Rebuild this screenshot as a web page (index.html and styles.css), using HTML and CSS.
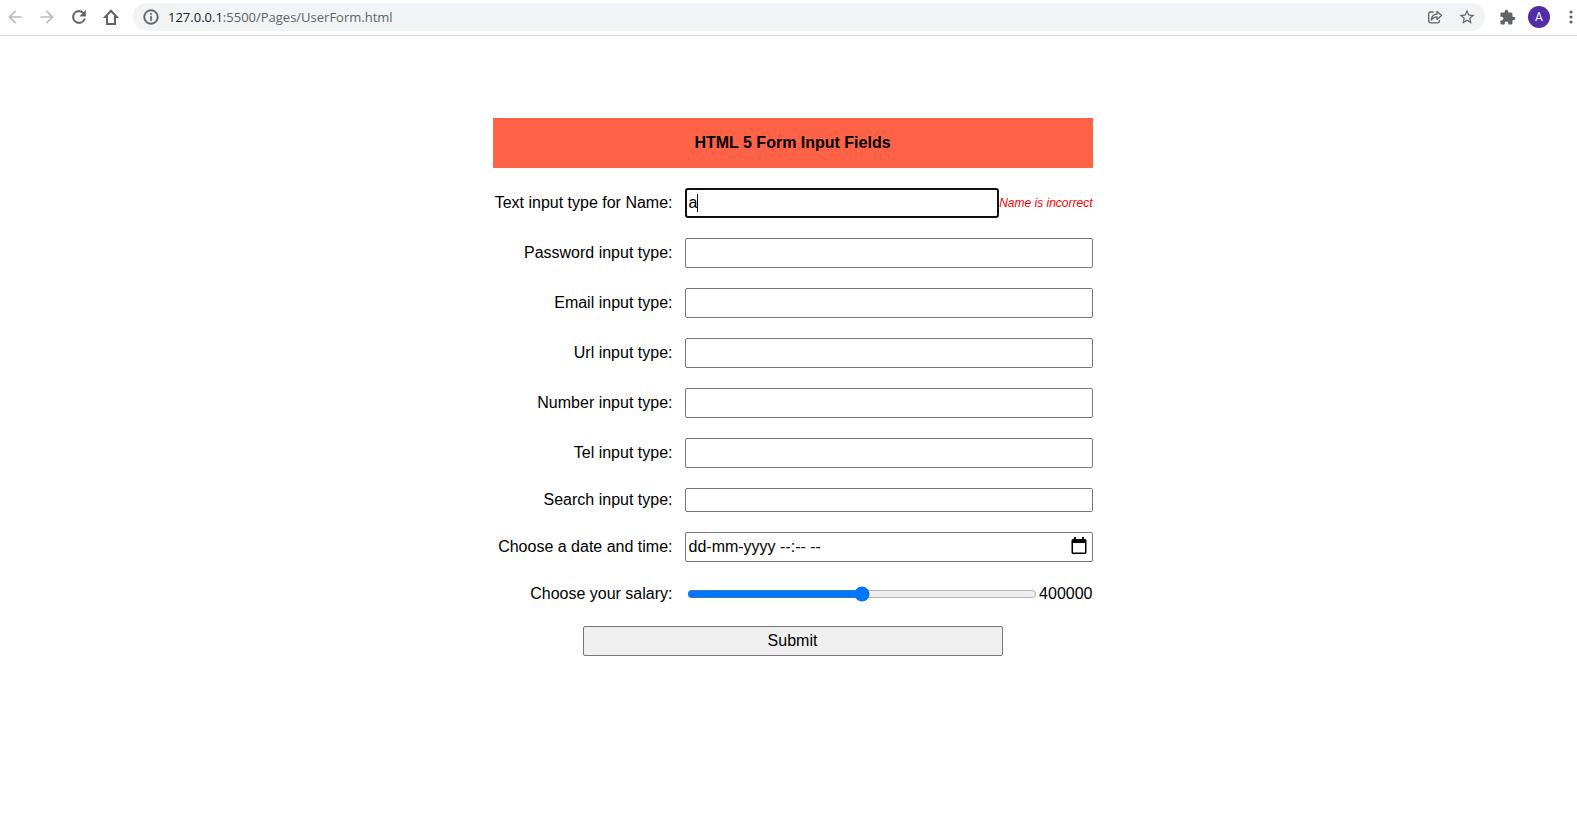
FILE: index.html
```html
<!DOCTYPE html>
<html lang="en">
<head>
  <meta charset="utf-8">
  <title>HTML 5 Form Input Fields</title>
  <link rel="stylesheet" href="styles.css">
</head>
<body>
  <header class="toolbar">
    <nav class="toolbar-group" aria-label="Navigation">
      <button class="icon-button is-disabled" type="button" aria-label="Back">
        <svg width="20" height="20" viewBox="0 0 24 24"><path d="M20 11H7.8l5.6-5.6L12 4l-8 8 8 8 1.4-1.4L7.8 13H20v-2z"/></svg>
      </button>
      <button class="icon-button is-disabled" type="button" aria-label="Forward">
        <svg width="20" height="20" viewBox="0 0 24 24"><path d="M12 4l-1.4 1.4 5.6 5.6H4v2h12.200l-5.600 5.600L12 20l8-8z"/></svg>
      </button>
      <button class="icon-button" type="button" aria-label="Reload">
        <svg width="20" height="20" viewBox="0 0 24 24"><path d="M17.650 6.350A8 8 0 1 0 19.730 14h-2.080A6 6 0 1 1 12 6c1.660 0 3.140.69 4.220 1.780L13 11h7V4l-2.350 2.350z" stroke="currentColor" stroke-width=".5"/></svg>
      </button>
      <button class="icon-button" type="button" aria-label="Home">
        <svg width="20" height="20" viewBox="0 0 20 20"><path d="M10 3.800 L4.200 10 H6 V17 H14 V10 H15.800 Z" fill="none" stroke="currentColor" stroke-width="2"/></svg>
      </button>
    </nav>
    <div class="address-bar">
      <svg class="info-icon" width="18" height="18" viewBox="0 0 24 24"><path d="M11 17h2v-6h-2v6zm1-15a10 10 0 1 0 0 20 10 10 0 0 0 0-20zm0 18a8 8 0 1 1 0-16 8 8 0 0 1 0 16zM11 9h2V7h-2v2z" stroke="currentColor" stroke-width=".5"/></svg>
      <div class="address" role="textbox" aria-label="Address" contenteditable="true" spellcheck="false"><span class="address-host">127.0.0.1</span>:5500/Pages/UserForm.html</div>
      <button class="icon-button" type="button" aria-label="Share">
        <svg width="16" height="16" viewBox="0 0 16 16" fill="none" stroke="currentColor" stroke-width="1.300" stroke-linejoin="round"><path d="M6.500 3H3.500Q1.700 3 1.700 4.800V12Q1.700 13.800 3.500 13.800H10.700Q12.500 13.800 12.500 12V11"/><path d="M4.300 11C4.800 7 7 5.200 10 5.200V2.500L14.500 6.500L10 10.400V7.800C7.500 7.800 5.700 8.700 4.300 11Z"/></svg>
      </button>
      <button class="icon-button" type="button" aria-label="Bookmark">
        <svg width="18" height="18" viewBox="0 0 24 24"><path d="M22 9.240l-7.190-.62L12 2 9.190 8.630 2 9.240l5.460 4.730L5.820 21 12 17.270 18.180 21l-1.630-7.030L22 9.240zM12 15.400l-3.760 2.270 1-4.280-3.320-2.880 4.380-.38L12 6.100l1.710 4.040 4.380.38-3.320 2.880 1 4.280L12 15.400z"/></svg>
      </button>
    </div>
    <div class="toolbar-group">
      <button class="icon-button" type="button" aria-label="Extensions">
        <svg width="17" height="17" viewBox="0 0 24 24"><path d="M20.500 11H19V7a2 2 0 0 0-2-2h-4V3.500a2.500 2.500 0 0 0-5 0V5H4a2 2 0 0 0-2 2v3.800h1.500a2.700 2.700 0 0 1 0 5.400H2V20a2 2 0 0 0 2 2h3.800v-1.500a2.700 2.700 0 0 1 5.400 0V22H17a2 2 0 0 0 2-2v-4h1.500a2.500 2.500 0 0 0 0-5z"/></svg>
      </button>
      <button class="icon-button" type="button" aria-label="Profile"><span class="avatar">A</span></button>
      <button class="icon-button menu-button" type="button" aria-label="Menu">
        <svg width="12" height="20" viewBox="0 0 12 20"><circle cx="6" cy="5" r="1.600"/><circle cx="6" cy="10" r="1.600"/><circle cx="6" cy="15" r="1.600"/></svg>
      </button>
    </div>
  </header>

  <main class="page">
    <form class="form" novalidate>
      <h1 class="form-title">HTML 5 Form Input Fields</h1>
      <div class="row">
        <label for="name">Text input type for Name:</label>
        <div class="control">
          <input class="field is-active" id="name" type="text" value="a" aria-describedby="name-error">
          <span class="caret"></span>
          <em class="error" id="name-error">Name is incorrect</em>
        </div>
      </div>
      <div class="row">
        <label for="password">Password input type:</label>
        <div class="control"><input class="field" id="password" type="password"></div>
      </div>
      <div class="row">
        <label for="email">Email input type:</label>
        <div class="control"><input class="field" id="email" type="email"></div>
      </div>
      <div class="row">
        <label for="url">Url input type:</label>
        <div class="control"><input class="field" id="url" type="url"></div>
      </div>
      <div class="row">
        <label for="number">Number input type:</label>
        <div class="control"><input class="field" id="number" type="number"></div>
      </div>
      <div class="row">
        <label for="tel">Tel input type:</label>
        <div class="control"><input class="field" id="tel" type="tel"></div>
      </div>
      <div class="row">
        <label for="search">Search input type:</label>
        <div class="control"><input class="field field-search" id="search" type="search"></div>
      </div>
      <div class="row">
        <label for="date">Choose a date and time:</label>
        <div class="control">
          <input class="field" id="date" type="text" value="dd-mm-yyyy --:-- --">
          <button class="picker" type="button" aria-label="Show date picker">
            <svg width="16" height="18" viewBox="0 0 16 18"><path d="M2 2h1V0h2v2h6V0h2v2h1a1.500 1.500 0 0 1 1.500 1.500v12A1.500 1.500 0 0 1 14 17H2A1.500 1.500 0 0 1 .5 15.500v-12A1.500 1.500 0 0 1 2 2zm0 4v9.500h12V6z"/></svg>
          </button>
        </div>
      </div>
      <div class="row">
        <label for="salary">Choose your salary:</label>
        <div class="control">
          <input class="range" id="salary" type="range" min="0" max="800000" step="1000" value="400000">
          <output for="salary">400000</output>
        </div>
      </div>
      <button class="submit" type="submit">Submit</button>
    </form>
  </main>
</body>
</html>
```

FILE: styles.css
```css
* {
  box-sizing: border-box;
}

body {
  margin: 0;
  background: #fff;
  color: #000;
  font: 16px/24px "Liberation Sans", Arial, sans-serif;
}

.toolbar {
  display: flex;
  align-items: center;
  height: 36px;
  padding-bottom: 1px;
  border-bottom: 1px solid #d5d7da;
  color: #5f6368;
  overflow: hidden;
}

.toolbar-group {
  display: flex;
  align-items: center;
  gap: 2px;
}

.icon-button {
  display: flex;
  flex: none;
  align-items: center;
  justify-content: center;
  width: 30px;
  height: 28px;
  padding: 0;
  border: 0;
  background: none;
  color: #5f6368;
}

.icon-button.is-disabled {
  color: #babcbe;
}

.menu-button {
  justify-content: flex-end;
  width: 21px;
}

svg {
  display: block;
  flex: none;
  fill: currentColor;
}

svg[fill="none"] {
  fill: none;
}

.address-bar {
  display: flex;
  flex: 1;
  align-items: center;
  gap: 2px;
  height: 28px;
  margin: 0 7px;
  padding: 0 3px 0 9px;
  border-radius: 14px;
  background: #f1f3f4;
}

.address {
  flex: 1;
  padding-left: 6px;
  font: 13px/20px "Open Sans", "Noto Sans", sans-serif;
  white-space: nowrap;
}

.address-host {
  color: #202124;
}

.avatar {
  width: 22px;
  height: 22px;
  border-radius: 50%;
  background: #512da8;
  color: #fff;
  font: 12px/22px Roboto, sans-serif;
  text-align: center;
}

.page {
  padding: 82px 0 0 8px;
}

.form {
  display: flex;
  flex-direction: column;
  gap: 20px;
  width: 600px;
  max-width: 100%;
  margin: 0 auto;
}

.form-title {
  margin: 0;
  padding: 13px;
  background: tomato;
  font-size: 16px;
  line-height: 24px;
  text-align: center;
}

.row {
  display: grid;
  grid-template-columns: 30% 68%;
  column-gap: 2%;
  align-items: center;
}

.row label {
  text-align: right;
}

.control {
  position: relative;
  display: flex;
  align-items: center;
}

.field {
  flex: 1;
  min-width: 0;
  height: 30px;
  margin: 0;
  padding: 1px 3px;
  border: 1px solid #767676;
  border-radius: 2px;
  outline: 0;
  background: #fff;
  color: #000;
  font: inherit;
  appearance: none;
}

.field.is-active {
  padding: 0 2px;
  border: 2px solid #101010;
  border-radius: 3px;
}

.field-search {
  height: 24px;
}

.caret {
  position: absolute;
  top: 6px;
  left: 12px;
  width: 1px;
  height: 18px;
  background: #000;
}

.error {
  color: #f00;
  font-size: 12px;
  white-space: nowrap;
}

.picker {
  position: absolute;
  top: 5px;
  right: 6px;
  padding: 0;
  border: 0;
  background: none;
  color: #000;
}

.range {
  flex: 1;
  min-width: 0;
  margin: 2px;
}

.submit {
  align-self: center;
  width: 70%;
  height: 30px;
  padding: 0;
  border: 1px solid #767676;
  border-radius: 2px;
  background: #efefef;
  color: #000;
  font: inherit;
}
```
